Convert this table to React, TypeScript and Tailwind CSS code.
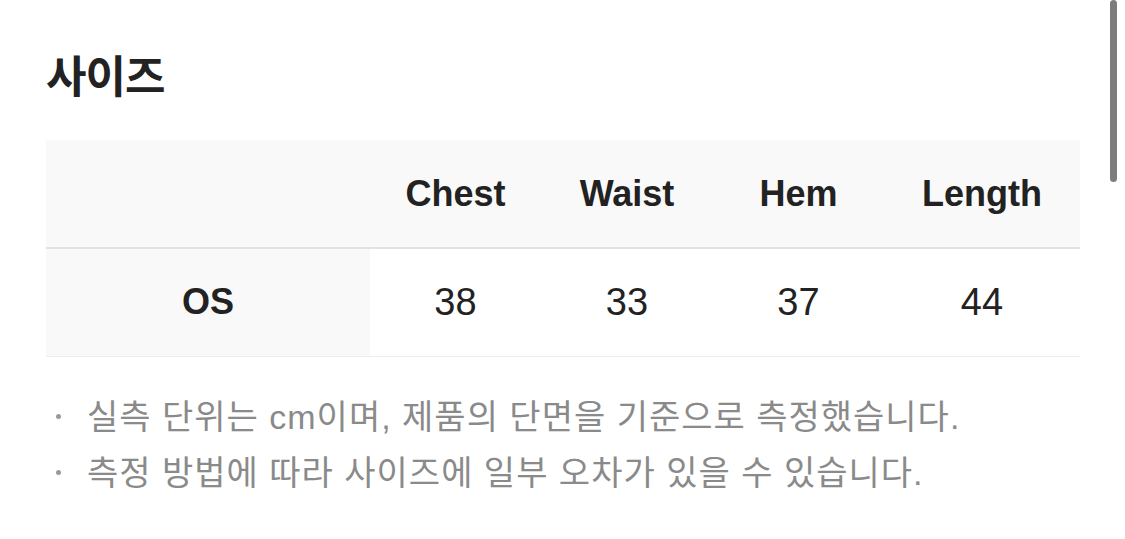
import React from "react";

const columns = ["Chest", "Waist", "Hem", "Length"];
const rows = [{ size: "OS", values: ["38", "33", "37", "44"] }];
const notes = [
  "실측 단위는 cm이며, 제품의 단면을 기준으로 측정했습니다.",
  "측정 방법에 따라 사이즈에 일부 오차가 있을 수 있습니다.",
];

export default function App() {
  return (
    <div
      className="relative w-[1125px] h-[539px] overflow-hidden bg-white text-[#222]"
      style={{ fontFamily: '"Liberation Sans", "Noto Sans CJK KR", sans-serif' }}
    >
      <div className="pl-[46px] pr-[45px] pt-[52px]">
        <h2 className="text-[44px] font-bold leading-[52px] tracking-[-1px]">사이즈</h2>

        <table className="mt-[36px] w-full border-collapse table-fixed">
          <colgroup>
            <col className="w-[324px]" />
            <col className="w-[171px]" />
            <col className="w-[172px]" />
            <col className="w-[171px]" />
            <col />
          </colgroup>
          <thead>
            <tr className="bg-[#f9f9f9] border-b-2 border-[#e2e2e2]">
              <th className="h-[108px]" />
              {columns.map((c) => (
                <th key={c} className="h-[108px] text-[36px] font-bold text-center">
                  {c}
                </th>
              ))}
            </tr>
          </thead>
          <tbody>
            {rows.map((r) => (
              <tr key={r.size} className="border-b border-[#ececec]">
                <td className="h-[108px] bg-[#f9f9f9] text-[36px] font-bold text-center">
                  {r.size}
                </td>
                {r.values.map((v, i) => (
                  <td key={i} className="h-[108px] text-[38px] text-center">
                    {v}
                  </td>
                ))}
              </tr>
            ))}
          </tbody>
        </table>

        <ul className="mt-[32px] text-[#8a8a8a] text-[34px] leading-[56px] tracking-[1px]">
          {notes.map((n) => (
            <li key={n} className="flex items-center">
              <span className="w-[41px] pl-[10px] flex">
                <span className="w-[5px] h-[5px] rounded-full bg-[#9a9a9a]" />
              </span>
              <span>{n}</span>
            </li>
          ))}
        </ul>
      </div>

      <div className="absolute right-[8px] top-0 w-[7px] h-[182px] rounded-full bg-[#7d7d7d]" />
    </div>
  );
}
